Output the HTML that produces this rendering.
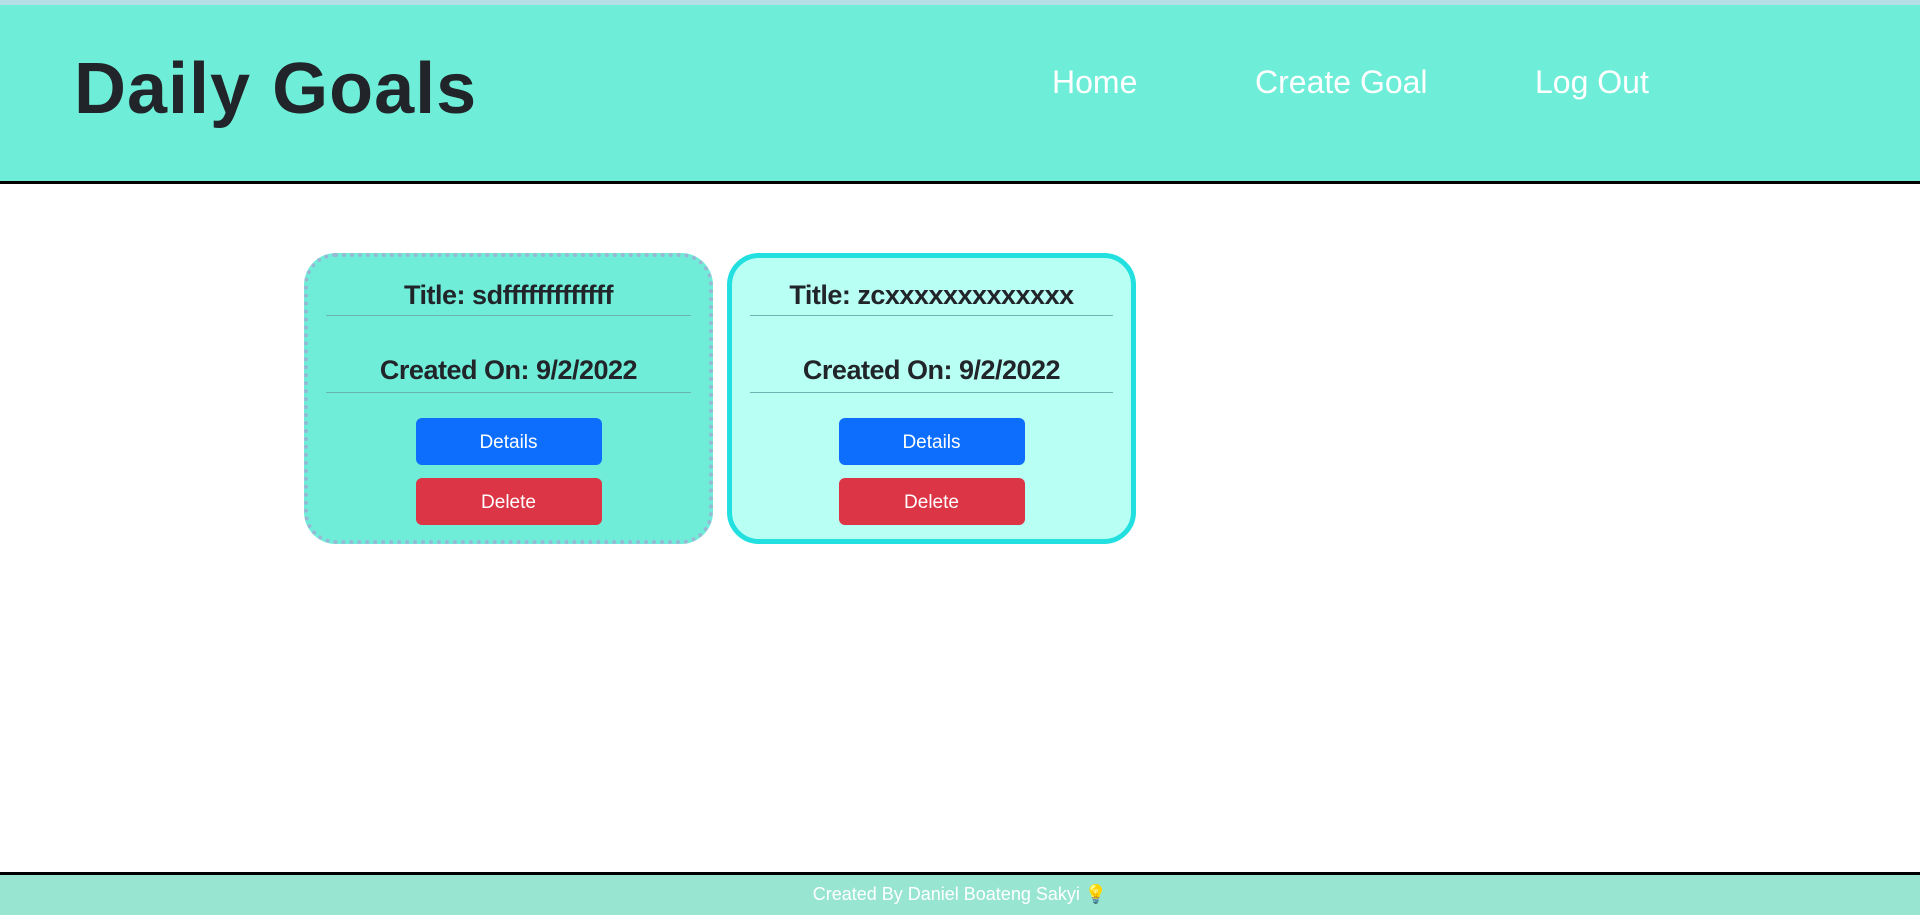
<!DOCTYPE html>
<html><head><meta charset="utf-8"><style>
*{box-sizing:border-box;margin:0;padding:0}
body{width:1920px;height:915px;position:relative;background:#fff;font-family:"Liberation Sans",sans-serif;color:#212529;overflow:hidden}
.top{position:absolute;left:0;top:0;width:1920px;height:5px;background:#b4dfe6}
.hdr{position:absolute;left:0;top:5px;width:1920px;height:176px;background:#6eeed8}
.line{position:absolute;left:0;top:181px;width:1920px;height:3px;background:#000}
.logo{position:absolute;left:74px;top:48px;font-size:72px;font-weight:bold;letter-spacing:1px;color:#212428}
.nav{position:absolute;top:64px;font-size:32px;color:#fff;font-weight:300}
.card{position:absolute;top:253px;width:409px;height:291px;border-radius:32px;text-align:center}
.c1{left:304px;background:#70edd8;border:4px dotted #98b8d6}
.c2{left:727px;background:#b8fff4;border:5px solid #22e0e0}
.t{position:absolute;left:18px;right:18px;font-size:27px;font-weight:bold;letter-spacing:-0.5px}
.hr{position:absolute;left:18px;right:18px;height:1px;background:#6bb5b0}
.btn{position:absolute;left:50%;margin-left:-93px;width:186px;height:47px;border-radius:6px;color:#fff;font-size:19px;line-height:49px}
.foot{position:absolute;left:0;top:872px;width:1920px;height:43px;background:#98e6d2;border-top:3px solid #000;color:#fff;text-align:center;font-size:18px;line-height:38px}
</style></head><body>
<div class="top"></div><div class="hdr"></div><div class="line"></div>
<div class="logo">Daily Goals</div>
<div class="nav" style="left:1052px">Home</div>
<div class="nav" style="left:1255px">Create Goal</div>
<div class="nav" style="left:1535px">Log Out</div>

<div class="card c1">
<div class="t" style="top:23px">Title: sdfffffffffffff</div>
<div class="hr" style="top:58px"></div>
<div class="t" style="top:98px">Created On: 9/2/2022</div>
<div class="hr" style="top:135px"></div>
<div class="btn" style="top:161px;background:#0d6efd">Details</div>
<div class="btn" style="top:221px;background:#dc3545">Delete</div>
</div>
<div class="card c2">
<div class="t" style="top:22px">Title: zcxxxxxxxxxxxxx</div>
<div class="hr" style="top:57px"></div>
<div class="t" style="top:97px">Created On: 9/2/2022</div>
<div class="hr" style="top:134px"></div>
<div class="btn" style="top:160px;background:#0d6efd">Details</div>
<div class="btn" style="top:220px;background:#dc3545">Delete</div>
</div>
<div class="foot">Created By Daniel Boateng Sakyi 💡</div>
</body></html>
